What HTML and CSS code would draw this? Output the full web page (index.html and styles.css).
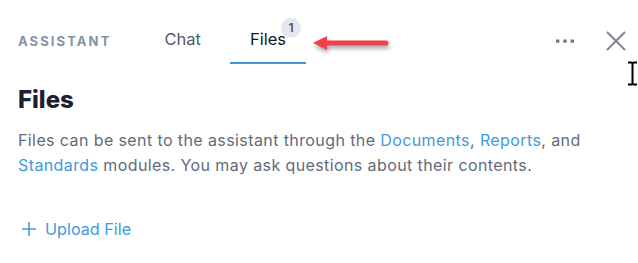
FILE: index.html
```html
<!DOCTYPE html>
<html lang="en">
<head>
    <meta charset="UTF-8">
    <meta name="viewport" content="width=device-width, initial-scale=1.0">
    <title>Assistant - Files</title>
    <link rel="stylesheet" href="styles.css">
</head>
<body>

    <div class="panel">
        <!-- Header -->
        <header class="panel__header">
            <span class="panel__title">ASSISTANT</span>
            <nav class="tabs">
                <a href="#" class="tab">Chat</a>
                <a href="#" class="tab tab--active">Files<span class="badge">1</span></a>
            </nav>
            <svg class="annotation" width="85" height="24" viewBox="0 0 85 24">
                <path d="M3 11 L17 4 L17 18 Z" fill="#f2414a"/>
                <line x1="15" y1="11" x2="76" y2="11" stroke="#f2414a" stroke-width="5" stroke-linecap="round"/>
            </svg>
            <div class="actions">
                <button class="icon-btn icon-btn--more" aria-label="More">
                    <svg width="18" height="4" viewBox="0 0 18 4">
                        <rect x="0" y="0.5" width="3.4" height="3.2" fill="#6b778a"/>
                        <rect x="7.3" y="0.5" width="3.4" height="3.2" fill="#6b778a"/>
                        <rect x="14.6" y="0.5" width="3.4" height="3.2" fill="#6b778a"/>
                    </svg>
                </button>
                <button class="icon-btn" aria-label="Close">
                    <svg width="20" height="20" viewBox="0 0 20 20">
                        <path d="M1 1 L19 19 M19 1 L1 19" stroke="#7d8189" stroke-width="1.8" fill="none"/>
                    </svg>
                </button>
            </div>
        </header>

        <!-- Content -->
        <main class="content">
            <h2 class="content__title">Files</h2>
            <p class="content__text">
                Files can be sent to the assistant through the <a href="#">Documents</a>, <a href="#">Reports</a>, and
                <a href="#">Standards</a> modules. You may ask questions about their contents.
            </p>
            <button class="upload">
                <svg width="14" height="14" viewBox="0 0 14 14">
                    <path d="M7 0 V14 M0 7 H14" stroke="#4299e1" stroke-width="1.6" fill="none"/>
                </svg>
                <span>Upload File</span>
            </button>
        </main>
    </div>

    <svg class="cursor" width="11" height="25" viewBox="0 0 11 25">
        <path d="M1 1.5 H4 Q5.5 1.5 5.5 3 V22 Q5.5 23.5 4 23.5 H1 M10 1.5 H7 Q5.5 1.5 5.5 3 M10 23.5 H7 Q5.5 23.5 5.5 22" stroke="#000" stroke-width="2" fill="none"/>
    </svg>

</body>
</html>
```

FILE: styles.css
```css
body {
    margin: 0;
    padding: 0;
    background-color: #fff;
    font-family: Inter, "Noto Sans", sans-serif;
}

.panel {
    width: 638px;
}

/* Header */
.panel__header {
    position: relative;
    box-sizing: border-box;
    height: 64px;
    padding: 18px 12px 0 18px;
    display: flex;
    align-items: center;
}

.panel__title {
    font-size: 13px;
    font-weight: 700;
    letter-spacing: 2.1px;
    color: #8792a3;
}

.tabs {
    align-self: stretch;
    display: flex;
    margin-left: 33px;
    gap: 9px;
}

.tab {
    position: relative;
    display: flex;
    align-items: center;
    padding: 0 20px 2px;
    font-size: 16.5px;
    color: #4f5a6b;
    text-decoration: none;
    border-bottom: 2px solid transparent;
}

.tab--active {
    color: #111827;
    border-bottom-color: #3b97dd;
}

.badge {
    position: absolute;
    top: 0;
    right: 5px;
    width: 20px;
    height: 20px;
    border-radius: 50%;
    background-color: #e2e8f0;
    color: #5a6372;
    font-size: 12px;
    font-weight: 700;
    line-height: 20px;
    text-align: center;
}

/* red arrow drawn on top of the screenshot */
.annotation {
    position: absolute;
    left: 310px;
    top: 32px;
    filter: drop-shadow(1px 3px 2px rgba(0, 0, 0, 0.35));
}

.actions {
    margin-left: auto;
    display: flex;
    align-items: center;
    gap: 32px;
}

.icon-btn {
    background: none;
    border: none;
    padding: 0;
    display: flex;
    cursor: pointer;
}

/* Content */
.content {
    padding: 0 18px;
}

.content__title {
    margin: 21px 0 0;
    font-size: 24px;
    line-height: 30px;
    font-weight: 800;
    color: #1a2232;
}

.content__text {
    max-width: 590px;
    margin: 13px 0 0;
    font-size: 16px;
    letter-spacing: 0.4px;
    line-height: 25px;
    color: #5f6b7a;
}

.content__text a {
    color: #3d9be0;
    text-decoration: none;
}

.upload {
    margin-top: 41px;
    padding: 0 0 0 4px;
    background: none;
    border: none;
    display: flex;
    align-items: center;
    gap: 9px;
    font-family: inherit;
    font-size: 16.2px;
    line-height: 20px;
    color: #4299e1;
    cursor: pointer;
}

.cursor {
    position: absolute;
    left: 627px;
    top: 61px;
}
```
